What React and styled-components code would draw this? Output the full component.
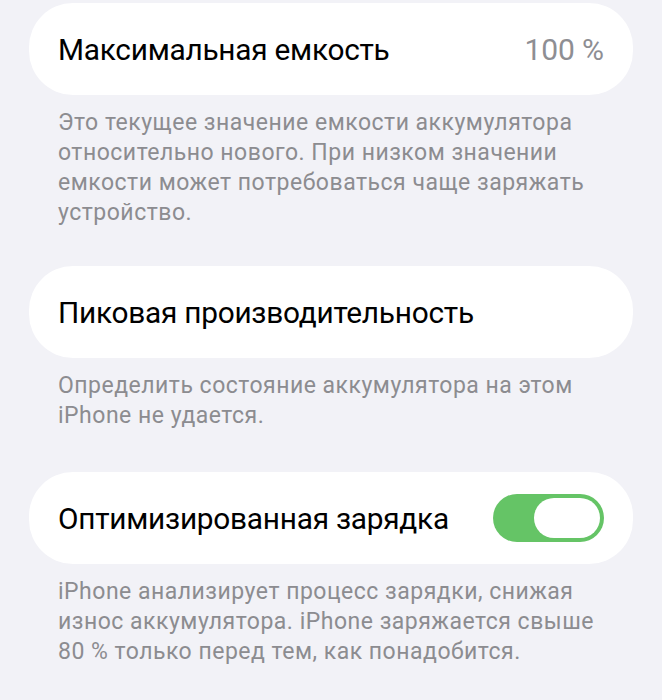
import React, { useState } from "react";
import styled, { createGlobalStyle } from "styled-components";

const Global = createGlobalStyle`
  html, body {
    margin: 0;
    padding: 0;
    background: #f2f2f7;
  }
  body {
    font-family: Roboto, "Noto Sans", "Liberation Sans", sans-serif;
    -webkit-font-smoothing: antialiased;
  }
`;

const Page = styled.div`
  width: 662px;
  min-height: 700px;
  box-sizing: border-box;
  padding: 3px 29px 0 29px;
  display: flex;
  flex-direction: column;
`;

const Section = styled.section`
  display: flex;
  flex-direction: column;
  margin-bottom: ${(p) => p.$after}px;
`;

const Card = styled.div`
  height: 92px;
  box-sizing: border-box;
  background: #ffffff;
  border-radius: 44px;
  padding: 0 29px 0 29px;
  display: flex;
  align-items: center;
  justify-content: space-between;
`;

const Title = styled.span`
  font-size: 29.8px;
  color: #000000;
  letter-spacing: -0.25px;
`;

const Value = styled.span`
  font-size: 30px;
  color: #8e8e93;
  letter-spacing: -0.1px;
`;

const Footer = styled.p`
  margin: 13px 0 0 0;
  padding: 0 29px;
  font-size: 23px;
  line-height: 30px;
  color: #8c8c90;
  letter-spacing: 0.5px;
`;

const SwitchTrack = styled.button`
  width: 111px;
  height: 48px;
  border: none;
  padding: 4px;
  border-radius: 24px;
  background: ${(p) => (p.$on ? "#65c466" : "#e9e9eb")};
  display: flex;
  justify-content: ${(p) => (p.$on ? "flex-end" : "flex-start")};
  align-items: center;
  cursor: pointer;
  box-sizing: border-box;
`;

const SwitchThumb = styled.span`
  width: 66px;
  height: 40px;
  border-radius: 20px;
  background: #ffffff;
`;

export default function App() {
  const [optimized, setOptimized] = useState(true);
  return (
    <>
      <Global />
      <Page>
        <Section $after={38}>
          <Card>
            <Title>Максимальная емкость</Title>
            <Value>100 %</Value>
          </Card>
          <Footer>
            Это текущее значение емкости аккумулятора относительно нового. При
            низком значении емкости может потребоваться чаще заряжать
            устройство.
          </Footer>
        </Section>
        <Section $after={41}>
          <Card>
            <Title>Пиковая производительность</Title>
          </Card>
          <Footer>
            Определить состояние аккумулятора на этом iPhone не удается.
          </Footer>
        </Section>
        <Section $after={0}>
          <Card>
            <Title>Оптимизированная зарядка</Title>
            <SwitchTrack
              $on={optimized}
              onClick={() => setOptimized((v) => !v)}
              aria-pressed={optimized}
            >
              <SwitchThumb />
            </SwitchTrack>
          </Card>
          <Footer>
            iPhone анализирует процесс зарядки, снижая износ аккумулятора.
            iPhone заряжается свыше 80 % только перед тем, как понадобится.
          </Footer>
        </Section>
      </Page>
    </>
  );
}
